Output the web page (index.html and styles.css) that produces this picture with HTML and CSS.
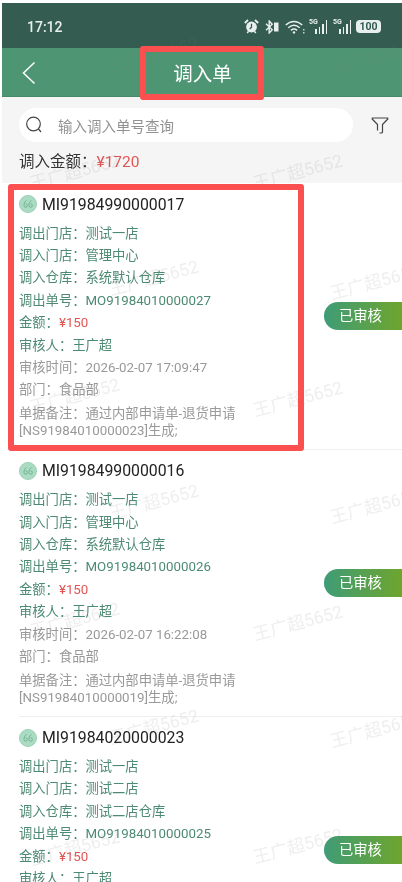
FILE: index.html
```html
<!DOCTYPE html>
<html lang="zh-CN">
<head>
    <meta charset="UTF-8">
    <title>调入单</title>
    <link rel="stylesheet" href="styles.css">
</head>
<body>
<div class="phone">
    <div class="status">
        <span class="time">17:12</span>
        <div class="status_icons">
            <svg width="15" height="15" viewBox="0 0 15 15"><circle cx="7.5" cy="8" r="5.4" fill="#e8f0ed"/><path d="M7.5 4.800v3.400l-1.800 1.800" stroke="#345c50" stroke-width="1.300" fill="none"/><path d="M.8 4l3.200-3M14.200 4l-3.200-3" stroke="#e8f0ed" stroke-width="1.800"/><path d="M3.200 14l1.400-1.800M11.800 14l-1.400-1.800" stroke="#e8f0ed" stroke-width="1.500"/></svg>
            <svg width="14" height="14" viewBox="0 0 14 14"><path d="M1 3.800l6.200 6-3 3.200V1l3 3.200L1 10.200" stroke="#e8f0ed" stroke-width="1.400" fill="none"/><rect x="9" y="2.500" width="4.500" height="9" fill="#e8f0ed"/></svg>
            <svg class="wifi" width="20" height="14" viewBox="0 0 20 14"><path d="M.8 5c5-4.800 11.400-4.800 16.400 0M3.300 7.700c3.600-3.200 7.800-3.200 11.400 0M5.900 10.300c2-1.600 4.200-1.600 6.200 0" stroke="#e8f0ed" stroke-width="1.500" fill="none"/><circle cx="9" cy="12.400" r="1.200" fill="#e8f0ed"/><path d="M18.800 9v1.500M18.800 12v1.500" stroke="#e8f0ed" stroke-width="1.200"/></svg>
            <div class="signal"><span class="net">5G</span><i class="b1"></i><i class="b2"></i><i class="b3"></i><i class="b4"></i></div>
            <div class="signal"><span class="net">5G</span><i class="b1"></i><i class="b2"></i><i class="b3"></i><i class="b4"></i></div>
            <span class="battery">100</span>
        </div>
    </div>
    <div class="nav">
        <svg class="back" width="14" height="24" viewBox="0 0 14 24"><path d="M12.500 1.500L1.500 12l11 10.500" stroke="#fff" stroke-width="1.500" fill="none"/></svg>
        <span class="title">调入单</span>
    </div>
    <div class="search_bar">
        <div class="search">
            <svg width="18" height="18" viewBox="0 0 18 18"><circle cx="8.500" cy="8" r="6.800" stroke="#444" stroke-width="1.200" fill="none"/><path d="M13.500 13l2.500 3" stroke="#444" stroke-width="1.200"/></svg>
            <span>输入调入单号查询</span>
        </div>
        <svg class="filter" width="18" height="18" viewBox="0 0 18 18"><path d="M6.500 14.500V8.500L1.200 3V2H16.800V3L11.500 8.500V16Q11.500 17 10 17H8.500" stroke="#444" stroke-width="1.200" fill="none" stroke-linejoin="round"/></svg>
    </div>
    <div class="total">调入金额：<span class="red">¥1720</span></div>

    <div class="list">
        <div class="item">
            <div class="item_head">
                <svg class="dot" width="18" height="18" viewBox="0 0 18 18"><circle cx="9" cy="9" r="8.500" fill="#a9dcc3" stroke="#9ccfb5"/><path d="M7.500 5.500C5.500 6.500 5 8.500 5 10.500a1.700 1.700 0 1 0 1.700-1.700M12.500 5.500c-2 1-2.500 3-2.500 5a1.700 1.700 0 1 0 1.700-1.700" stroke="#74b093" fill="none"/></svg>
                MI91984990000017
            </div>
            <div class="row green">调出门店：测试一店</div>
            <div class="row green">调入门店：管理中心</div>
            <div class="row green">调入仓库：系统默认仓库</div>
            <div class="row green">调出单号：MO91984010000027</div>
            <div class="row green">金额：<span class="red">¥150</span></div>
            <div class="row green">审核人：王广超</div>
            <div class="row gray">审核时间：2026-02-07 17:09:47</div>
            <div class="row gray">部门：食品部</div>
            <div class="row note">单据备注：通过内部申请单-退货申请<br>[NS91984010000023]生成;</div>
            <span class="tag">已审核</span>
        </div>
        <div class="item">
            <div class="item_head">
                <svg class="dot" width="18" height="18" viewBox="0 0 18 18"><circle cx="9" cy="9" r="8.500" fill="#a9dcc3" stroke="#9ccfb5"/><path d="M7.500 5.500C5.500 6.500 5 8.500 5 10.500a1.700 1.700 0 1 0 1.700-1.700M12.500 5.500c-2 1-2.500 3-2.500 5a1.700 1.700 0 1 0 1.700-1.700" stroke="#74b093" fill="none"/></svg>
                MI91984990000016
            </div>
            <div class="row green">调出门店：测试一店</div>
            <div class="row green">调入门店：管理中心</div>
            <div class="row green">调入仓库：系统默认仓库</div>
            <div class="row green">调出单号：MO91984010000026</div>
            <div class="row green">金额：<span class="red">¥150</span></div>
            <div class="row green">审核人：王广超</div>
            <div class="row gray">审核时间：2026-02-07 16:22:08</div>
            <div class="row gray">部门：食品部</div>
            <div class="row note">单据备注：通过内部申请单-退货申请<br>[NS91984010000019]生成;</div>
            <span class="tag">已审核</span>
        </div>
        <div class="item">
            <div class="item_head">
                <svg class="dot" width="18" height="18" viewBox="0 0 18 18"><circle cx="9" cy="9" r="8.500" fill="#a9dcc3" stroke="#9ccfb5"/><path d="M7.500 5.500C5.500 6.500 5 8.500 5 10.500a1.700 1.700 0 1 0 1.700-1.700M12.500 5.500c-2 1-2.500 3-2.500 5a1.700 1.700 0 1 0 1.700-1.700" stroke="#74b093" fill="none"/></svg>
                MI91984020000023
            </div>
            <div class="row green">调出门店：测试一店</div>
            <div class="row green">调入门店：测试二店</div>
            <div class="row green">调入仓库：测试二店仓库</div>
            <div class="row green">调出单号：MO91984010000025</div>
            <div class="row green">金额：<span class="red">¥150</span></div>
            <div class="row green">审核人：王广超</div>
            <span class="tag">已审核</span>
        </div>
    </div>

    <!-- 水印 -->
    <span class="mark a1">王广超5652</span>
    <span class="mark a2">王广超5652</span>
    <span class="mark a3">王广超5652</span>
    <span class="mark a4">王广超5652</span>
    <span class="mark b1">王广超5652</span>
    <span class="mark b2">王广超5652</span>
    <span class="mark b3">王广超5652</span>
    <span class="mark b4">王广超5652</span>
    <span class="mark c1">王广超5652</span>
    <span class="mark c2">王广超5652</span>
    <span class="mark c3">王广超5652</span>
    <span class="mark c4">王广超5652</span>
    <span class="mark d1">王广超5652</span>
    <span class="mark d2">王广超5652</span>
    <span class="mark d3">王广超5652</span>
    <span class="mark d4">王广超5652</span>

    <!-- 红框标注 -->
    <div class="red_box box_title"></div>
    <div class="red_box box_item"></div>
</div>
</body>
</html>
```

FILE: styles.css
```css
*{
    margin: 0;
    padding: 0;
    box-sizing: border-box;
}
html,body{
    height: 100%;
    overflow: hidden;
    background-color: #fff;
}
body{
    padding: 3px 0 0 2px;
    font-family: "Roboto", "Noto Sans CJK SC", sans-serif;
}
.phone{
    position: relative;
    height: 879px;
    overflow: hidden;
    background-color: #f5f5f5;
    filter: blur(0.35px);
}
.status{
    height: 45px;
    padding: 2px 21px 0 25px;
    display: flex;
    align-items: center;
    justify-content: space-between;
    background-color: #345c50;
    color: #e8f0ed;
}
.time{
    font-size: 14px;
    font-weight: 500;
}
.status_icons{
    display: flex;
    align-items: center;
    gap: 6px;
}
.wifi{
    margin-right: -2px;
}
.signal{
    position: relative;
    width: 18px;
    height: 15px;
    display: flex;
    align-items: flex-end;
    justify-content: flex-end;
    gap: 2px;
}
.signal i{
    display: block;
    width: 1.5px;
    background-color: #e8f0ed;
}
.signal .b1{ height: 5px; }
.signal .b2{ height: 7px; }
.signal .b3{ height: 10px; }
.signal .b4{ height: 14px; }
.net{
    position: absolute;
    left: 0;
    top: -1px;
    font-size: 7px;
    font-weight: 700;
    line-height: 8px;
}
.battery{
    width: 25px;
    height: 13px;
    margin-left: -1px;
    border-radius: 4px;
    text-align: center;
    font-size: 10.500px;
    font-weight: 700;
    line-height: 13px;
    background-color: #e8f0ed;
    color: #345c50;
}
.nav{
    position: relative;
    height: 49px;
    display: flex;
    align-items: center;
    justify-content: center;
    background-color: #4e9673;
    border-bottom: 1px solid #468a69;
}
.back{
    position: absolute;
    left: 19.500px;
    top: 13px;
}
.title{
    padding-left: 1px;
    font-size: 19.500px;
    color: #fff;
}
.search_bar{
    padding: 11px 13px 0 17px;
    display: flex;
    align-items: center;
    justify-content: space-between;
}
.search{
    width: 334px;
    height: 34px;
    padding-left: 6px;
    display: flex;
    align-items: center;
    gap: 15px;
    border-radius: 17px;
    background-color: #fff;
    font-size: 14.500px;
    color: #929292;
}
.total{
    height: 41px;
    padding: 8px 0 0 17px;
    font-size: 15.500px;
    line-height: 24px;
    color: #333;
}
.red{
    color: #e25555;
}
.list{
    background-color: #fff;
}
.item{
    position: relative;
    margin: 0 0 0 17px;
    padding: 6px 0 10px;
    border-bottom: 1px solid #efefef;
}
.item_head{
    height: 30px;
    margin-bottom: 3.500px;
    display: flex;
    align-items: center;
    font-size: 15.800px;
    color: #222;
}
.dot{
    margin-right: 5px;
}
.row{
    font-size: 13.300px;
    line-height: 22.400px;
}
.green{
    color: #4d8a73;
}
.gray{
    color: #999;
}
.note{
    line-height: 17px;
    padding-top: 3px;
    color: #999;
}
.tag{
    position: absolute;
    right: 0;
    top: 119px;
    width: 78px;
    height: 28px;
    padding-left: 15px;
    border-radius: 14px 0 0 14px;
    font-size: 14.300px;
    line-height: 28px;
    color: #fff;
    background: linear-gradient(to right, #3f9c76, #6ea52e);
}
.mark{
    position: absolute;
    transform: rotate(-15deg);
    font-size: 17.500px;
    line-height: 24px;
    white-space: nowrap;
    color: rgba(120, 120, 120, 0.13);
}
.a1{ left: 105.500px; top: 40px; }
.a2{ left: 105.500px; top: 263px; }
.a3{ left: 105.500px; top: 487px; }
.a4{ left: 105.500px; top: 712px; }
.b1{ left: 326.500px; top: 42px; }
.b2{ left: 326.500px; top: 267px; }
.b3{ left: 326.500px; top: 491px; }
.b4{ left: 326.500px; top: 715px; }
.c1{ left: 26.500px; top: 157px; }
.c2{ left: 26.500px; top: 381px; }
.c3{ left: 26.500px; top: 605px; }
.c4{ left: 26.500px; top: 833px; }
.d1{ left: 249.500px; top: 157px; }
.d2{ left: 249.500px; top: 384px; }
.d3{ left: 249.500px; top: 608px; }
.d4{ left: 249.500px; top: 831px; }
.red_box{
    position: absolute;
    border: 6px solid #fc5050;
    border-radius: 3px;
}
.box_title{
    left: 137.500px;
    top: 43px;
    width: 124px;
    height: 54px;
}
.box_item{
    left: 5.500px;
    top: 181px;
    width: 296.500px;
    height: 267px;
}
```
